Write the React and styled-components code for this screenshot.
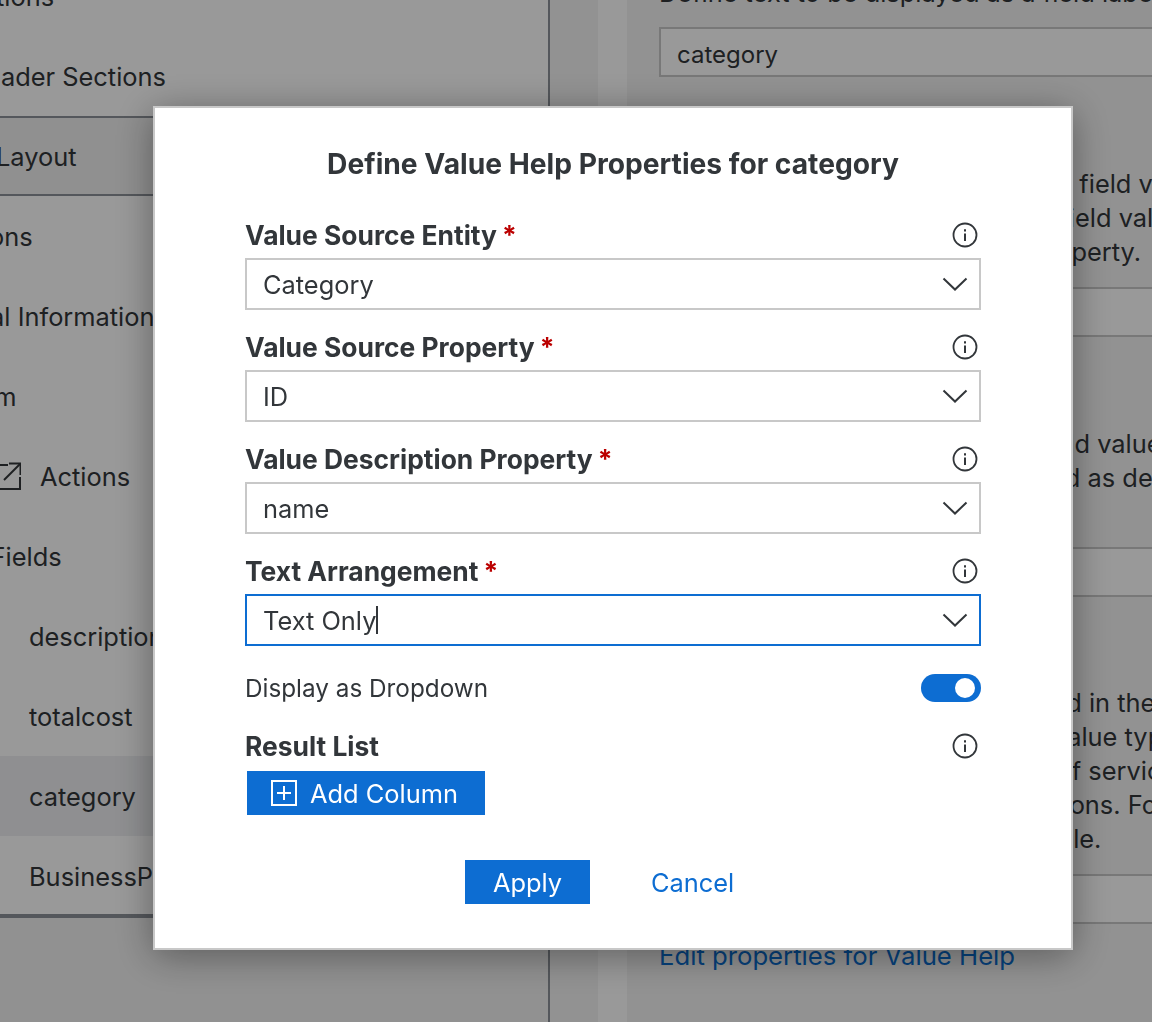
import React from "react";
import styled, { createGlobalStyle } from "styled-components";

const GlobalStyle = createGlobalStyle`
  html, body {
    margin: 0;
    height: 100%;
    overflow: hidden;
    background: #ffffff;
  }
  #root {
    height: 100%;
  }
  * {
    box-sizing: border-box;
  }
`;

const Page = styled.div`
  display: flex;
  width: 1152px;
  height: 1022px;
  overflow: hidden;
  background: #f8f8f8;
  color: #32363a;
  font-family: Inter, "Liberation Sans", sans-serif;
  font-size: 25.4px;
`;

const Tree = styled.nav`
  flex: 0 0 550px;
  height: 1022px;
  overflow: hidden;
  background: #f2f2f2;
  border-right: 2px solid #8d9299;
`;

const TreeList = styled.div`
  margin-top: -44px;
  background: #ffffff;
  border-bottom: 4px solid #8d9299;
`;

const TreeRow = styled.div`
  display: flex;
  align-items: center;
  height: 80px;
  padding-left: ${(p) => (p.$nested ? 29 : 0)}px;
  margin-bottom: ${(p) => (p.$last ? -2 : 0)}px;
  white-space: nowrap;
  background: ${(p) => (p.$selected ? "#eeeff2" : p.$group ? "#f0f0f0" : "transparent")};
  border-top: ${(p) => (p.$group ? "2px solid #8d9299" : "none")};
  border-bottom: ${(p) => (p.$group ? "2px solid #8d9299" : "none")};
`;

const TreeLabel = styled.span`
  display: inline-flex;
  align-items: center;
  gap: 19px;
  margin-left: ${(p) => p.$offset || 0}px;
`;

const Gutter = styled.div`
  flex: 0 0 48px;
  background: #f4f4f4;
`;

const Sash = styled.div`
  flex: 0 0 29px;
  background: #ffffff;
`;

const Details = styled.section`
  flex: 1;
  min-width: 0;
  padding: 0 0 0 32px;
  overflow: hidden;
  background: #f4f4f4;
`;

const Clipped = styled.div`
  margin-top: -24px;
  height: 34px;
  line-height: 34px;
  white-space: nowrap;
`;

const GhostInput = styled.div`
  display: flex;
  align-items: center;
  width: 700px;
  height: 50px;
  margin-top: ${(p) => p.$top}px;
  padding: 4px 0 0 16px;
  background: #ffffff;
  border: 2px solid #c8c8c8;
  font-size: 24px;
`;

const Paragraph = styled.p`
  margin: ${(p) => p.$top}px 0 0;
  line-height: 34px;
`;

const ParagraphLine = styled.span`
  display: block;
  margin-left: ${(p) => p.$shift || 0}px;
  white-space: nowrap;
`;

const BackLink = styled.a`
  display: block;
  margin-top: 15px;
  line-height: 34px;
  font-size: 25.7px;
  color: #0a6ed1;
`;

const Overlay = styled.div`
  position: fixed;
  inset: 0;
  padding: 106px 0 0 153px;
  background: rgba(0, 0, 0, 0.4);
`;

const Dialog = styled.div`
  display: flex;
  flex-direction: column;
  width: 920px;
  height: 844px;
  padding: 38px 90px 0;
  background: #ffffff;
  border: 2px solid #c8c8c8;
  box-shadow: 0 6px 36px rgba(0, 0, 0, 0.38);
  color: #32363a;
`;

const Title = styled.h2`
  margin: 0 0 36px;
  height: 36px;
  line-height: 36px;
  font-size: 28.2px;
  font-weight: 700;
  text-align: center;
`;

const Field = styled.div`
  display: flex;
  flex-direction: column;
  height: 112px;
`;

const LabelRow = styled.div`
  display: flex;
  flex: none;
  align-items: center;
  justify-content: space-between;
  height: 40px;
  padding: 0 3px 6px 0;
`;

const Label = styled.label`
  font-size: 26.4px;
  font-weight: 700;
`;

const Required = styled.span`
  margin-left: 5px;
  color: #bb0000;
`;

const Select = styled.div`
  display: flex;
  align-items: center;
  justify-content: space-between;
  height: 52px;
  padding: 0 11px 0 16px;
  border: 2px solid ${(p) => (p.$focused ? "#0d6dd2" : "#c8c8c8")};
`;

const SelectValue = styled.span`
  display: inline-flex;
  align-items: center;
`;

const Caret = styled.span`
  width: 2px;
  height: 28px;
  background: #32363a;
`;

const SwitchRow = styled.div`
  display: flex;
  align-items: center;
  justify-content: space-between;
  height: 28px;
  margin-top: 8px;
  font-size: 24.3px;
`;

const Toggle = styled.span`
  display: flex;
  align-items: center;
  justify-content: flex-end;
  width: 60px;
  height: 28px;
  padding-right: 6px;
  border-radius: 14px;
  background: #0d6dd2;
`;

const Thumb = styled.span`
  width: 20px;
  height: 20px;
  border-radius: 50%;
  background: #ffffff;
`;

const ResultRow = styled(LabelRow)`
  margin-top: 27px;
`;

const PrimaryButton = styled.button`
  display: flex;
  align-items: center;
  justify-content: center;
  gap: 13px;
  width: ${(p) => p.$width}px;
  height: 44px;
  margin: 0;
  padding: 0;
  border: none;
  border-radius: 0;
  background: #0d6dd2;
  color: #ffffff;
  font-family: inherit;
  font-size: 25.4px;
`;

const AddButton = styled(PrimaryButton)`
  justify-content: flex-start;
  margin: 2px 0 0 2px;
  padding-left: 24px;
`;

const Footer = styled.div`
  display: flex;
  align-items: center;
  margin: 45px 0 0 220px;
`;

const LinkButton = styled.button`
  margin-left: 61px;
  padding: 0;
  border: none;
  background: none;
  color: #0d6dd2;
  font-family: inherit;
  font-size: 25.4px;
`;

const InfoIcon = () => (
  <svg width="26" height="26" viewBox="0 0 26 26" fill="none" stroke="#32363a" strokeWidth="2">
    <circle cx="13" cy="13" r="11.5" strokeWidth="1.8" />
    <path d="M13 11.5v7.5" />
    <path d="M13 7.2v2.2" />
  </svg>
);

const ChevronIcon = () => (
  <svg width="26" height="16" viewBox="0 0 26 16" fill="none" stroke="#32363a" strokeWidth="2">
    <path d="M1.5 2.5 13 13.5 24.5 2.5" />
  </svg>
);

const PlusBoxIcon = () => (
  <svg width="26" height="26" viewBox="0 0 26 26" fill="none" stroke="#ffffff" strokeWidth="2">
    <rect x="1" y="1" width="24" height="24" />
    <path d="M13 6v14M6 13h14" />
  </svg>
);

const ExternalIcon = () => (
  <svg width="26" height="28" viewBox="0 0 26 28" fill="none" stroke="#32363a" strokeWidth="2">
    <path d="M13 3H1v24h24V15" />
    <path d="M25 2 9 18" />
    <path d="M14 1.5h11.5V13" />
  </svg>
);

const fields = [
  { label: "Value Source Entity", value: "Category" },
  { label: "Value Source Property", value: "ID" },
  { label: "Value Description Property", value: "name" },
  { label: "Text Arrangement", value: "Text Only", focused: true },
];

export default function App() {
  return (
    <Page>
      <GlobalStyle />
      <Tree>
        <TreeList>
          <TreeRow>
            <TreeLabel $offset={-36}>Actions</TreeLabel>
          </TreeRow>
          <TreeRow>
            <TreeLabel $offset={-33}>Header Sections</TreeLabel>
          </TreeRow>
          <TreeRow $group>
            <TreeLabel $offset={-72}>Page Layout</TreeLabel>
          </TreeRow>
          <TreeRow>
            <TreeLabel $offset={-71}>Sections</TreeLabel>
          </TreeRow>
          <TreeRow>
            <TreeLabel $offset={-83}>General Information</TreeLabel>
          </TreeRow>
          <TreeRow>
            <TreeLabel $offset={-45}>Form</TreeLabel>
          </TreeRow>
          <TreeRow>
            <TreeLabel $offset={-5}>
              <ExternalIcon />
              Actions
            </TreeLabel>
          </TreeRow>
          <TreeRow>
            <TreeLabel $offset={-78}>Form Fields</TreeLabel>
          </TreeRow>
          <TreeRow $nested>description</TreeRow>
          <TreeRow $nested>totalcost</TreeRow>
          <TreeRow $nested $selected>category</TreeRow>
          <TreeRow $nested $last>BusinessPartner</TreeRow>
        </TreeList>
      </Tree>
      <Gutter />
      <Sash />
      <Details>
        <Clipped>Define text to be displayed as a field label</Clipped>
        <GhostInput $top={17}>category</GhostInput>
        <Paragraph $top={90}>
          <ParagraphLine $shift={13}>Define how the description of the field v</ParagraphLine>
          <ParagraphLine $shift={75}>Use the ID and description field val</ParagraphLine>
          <ParagraphLine $shift={139}>Select a value help property.</ParagraphLine>
        </Paragraph>
        <GhostInput $top={18} />
        <Paragraph $top={90}>
          <ParagraphLine $shift={56}>Define a value help for the field value</ParagraphLine>
          <ParagraphLine $shift={274}>can be used as de</ParagraphLine>
        </Paragraph>
        <GhostInput $top={52} />
        <Paragraph $top={89}>
          <ParagraphLine $shift={149}>Value help is displayed in the</ParagraphLine>
          <ParagraphLine $shift={199}>for the selected value typ</ParagraphLine>
          <ParagraphLine $shift={335}>a list of servic</ParagraphLine>
          <ParagraphLine $shift={314}>annotations. Fo</ParagraphLine>
          <ParagraphLine $shift={334}>example.</ParagraphLine>
        </Paragraph>
        <GhostInput $top={18} />
        <BackLink>Edit properties for Value Help</BackLink>
      </Details>
      <Overlay>
        <Dialog>
          <Title>Define Value Help Properties for category</Title>
          {fields.map((field) => (
            <Field key={field.label}>
              <LabelRow>
                <Label>
                  {field.label}
                  <Required>*</Required>
                </Label>
                <InfoIcon />
              </LabelRow>
              <Select $focused={field.focused}>
                <SelectValue>
                  {field.value}
                  {field.focused && <Caret />}
                </SelectValue>
                <ChevronIcon />
              </Select>
            </Field>
          ))}
          <SwitchRow>
            <span>Display as Dropdown</span>
            <Toggle>
              <Thumb />
            </Toggle>
          </SwitchRow>
          <ResultRow>
            <Label>Result List</Label>
            <InfoIcon />
          </ResultRow>
          <AddButton $width={238}>
            <PlusBoxIcon />
            Add Column
          </AddButton>
          <Footer>
            <PrimaryButton $width={125}>Apply</PrimaryButton>
            <LinkButton>Cancel</LinkButton>
          </Footer>
        </Dialog>
      </Overlay>
    </Page>
  );
}
